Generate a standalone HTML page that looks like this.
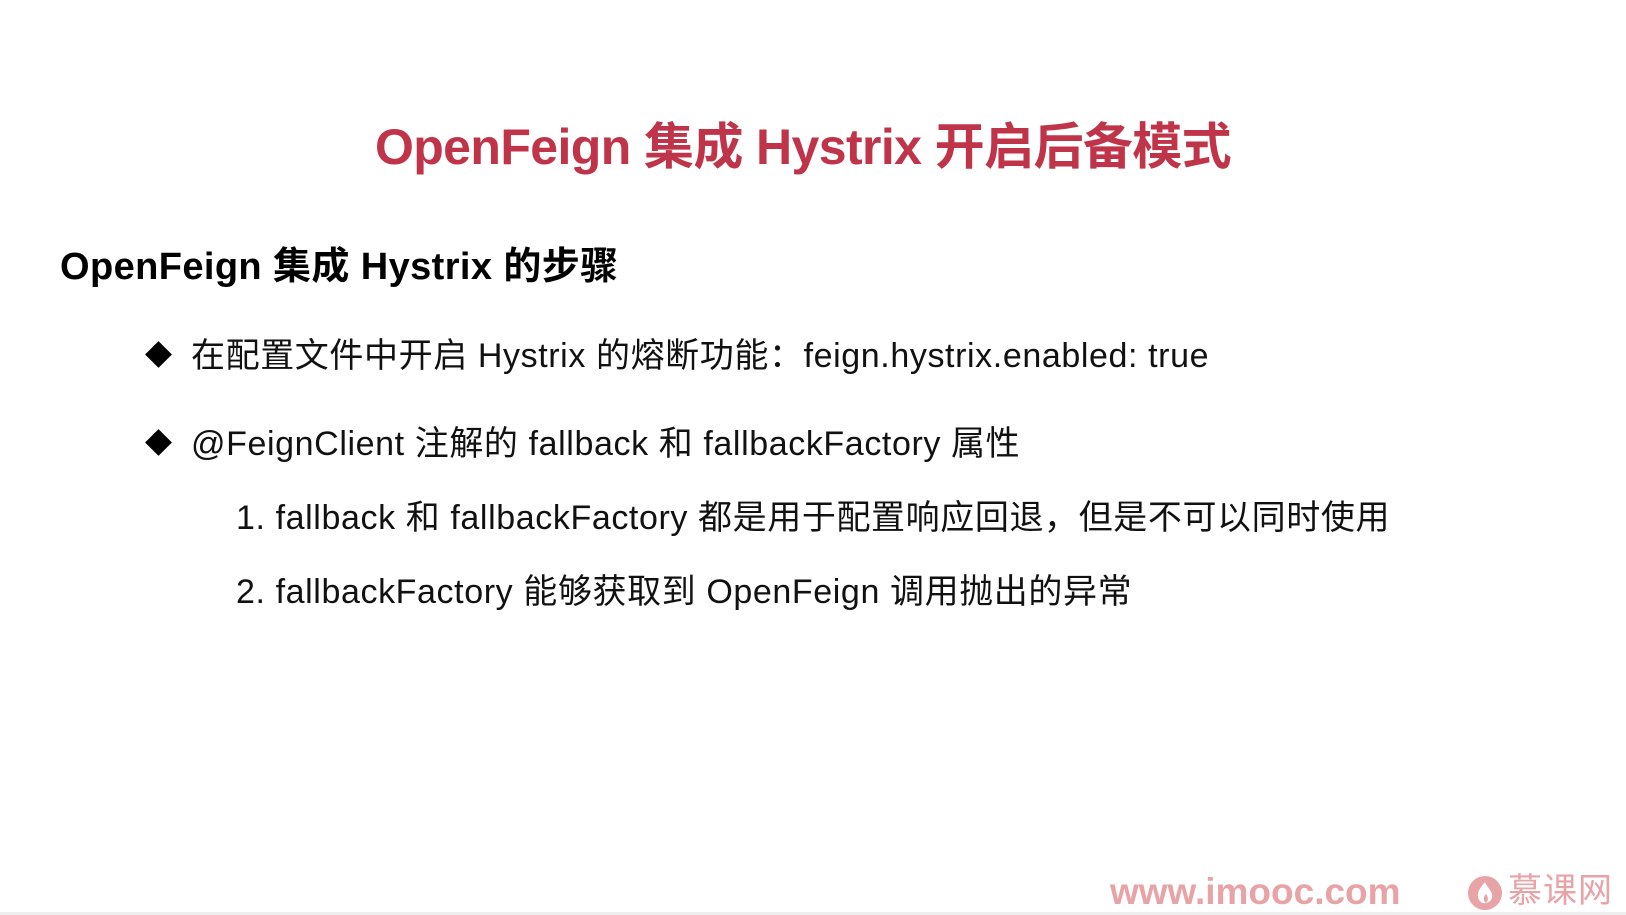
<!DOCTYPE html>
<html><head><meta charset="utf-8"><style>
html,body{margin:0;padding:0;background:#fff;}
body{width:1626px;height:915px;position:relative;overflow:hidden;font-family:"Liberation Sans","Noto Sans CJK SC",sans-serif;}
.a{position:absolute;white-space:nowrap;line-height:1;}
.t{left:-10px;width:1626px;text-align:center;top:122px;font-size:50px;font-weight:bold;color:#c0344a;letter-spacing:-0.6px;}
.s{left:60px;top:248px;font-size:38px;font-weight:bold;color:#000;letter-spacing:0.4px;}
.b{font-size:34px;color:#111;letter-spacing:0.6px;}
.d{position:absolute;width:19px;height:19px;background:#000;transform:rotate(45deg);}
.f{left:1110px;top:873px;font-size:37px;font-weight:bold;color:#e8a3a6;}
.m{left:1508px;top:874px;font-size:34px;color:#e8a3a6;letter-spacing:1px;}
</style></head><body>
<div class="a t">OpenFeign 集成 Hystrix 开启后备模式</div>
<div class="a s">OpenFeign 集成 Hystrix 的步骤</div>
<div class="d" style="left:149px;top:345px"></div>
<div class="a b" style="left:191px;top:339px">在配置文件中开启 Hystrix 的熔断功能：feign.hystrix.enabled: true</div>
<div class="d" style="left:149px;top:433px"></div>
<div class="a b" style="left:191px;top:427px">@FeignClient 注解的 fallback 和 fallbackFactory 属性</div>
<div class="a b" style="left:236px;top:501px">1. fallback 和 fallbackFactory 都是用于配置响应回退，但是不可以同时使用</div>
<div class="a b" style="left:236px;top:575px">2. fallbackFactory 能够获取到 OpenFeign 调用抛出的异常</div>
<div class="a f">www.imooc.com</div>
<svg class="a" style="left:1467px;top:875px" width="36" height="36" viewBox="0 0 36 36"><circle cx="18" cy="18" r="17" fill="#e8a3a6"/><path d="M18 7c-5 6-8 10-7 15 1 5 5 7 8 6-3-2-3-6 0-9 2 3 3 6 0 9 4-1 7-4 6-9-1-4-5-7-7-12z" fill="#fff"/></svg>
<div class="a m">慕课网</div>
<div class="a" style="left:0;top:912px;width:1626px;height:3px;background:#eee"></div>
</body></html>
